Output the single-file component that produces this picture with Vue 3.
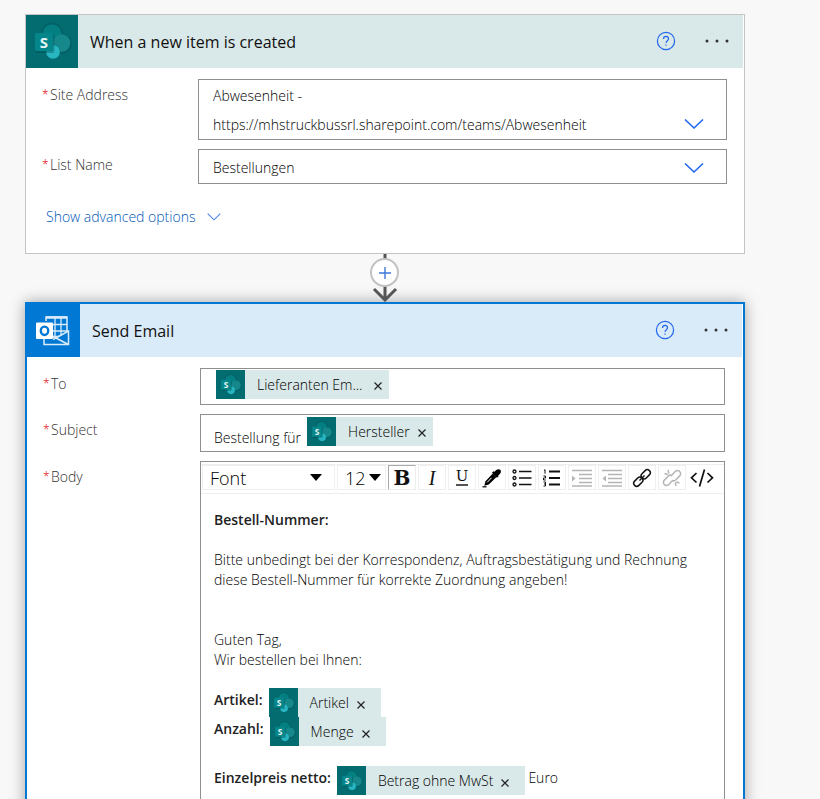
<script setup>
import { ref, h } from 'vue'

const site = ref('Abwesenheit')
const list = ref('Bestellungen')
const font = ref('Font')
const size = ref('12')
const subject = ref('Bestellung für')
const recipient = ref('')

const SharePointIcon = () =>
  h('svg', { viewBox: '0 0 52 52', 'aria-hidden': 'true', width: '100%', height: '100%' }, [
    h('circle', { cx: 26, cy: 18, r: 11, fill: '#00454a', opacity: 0.25 }),
    h('circle', { cx: 36, cy: 28.5, r: 10, fill: '#00454a', opacity: 0.25 }),
    h('circle', { cx: 26, cy: 18.5, r: 9.5, fill: '#037f82' }),
    h('circle', { cx: 35.5, cy: 27.5, r: 8.8, fill: '#16888c' }),
    h('circle', { cx: 27, cy: 36.5, r: 6.8, fill: '#28b5c2' }),
    h('rect', { x: 9.5, y: 18.5, width: 19, height: 19, rx: 2, fill: '#00454a', opacity: 0.35 }),
    h('rect', { x: 9, y: 17.5, width: 18, height: 18, rx: 1.5, fill: '#04868a' }),
    h('text', { x: 18, y: 32, 'text-anchor': 'middle', fill: '#e6f4f4', 'font-size': 15, 'font-weight': 700, 'font-family': 'Noto Sans, sans-serif' }, 'S'),
  ])

const Token = (props) =>
  h('span', { class: 'token', contenteditable: 'false' }, [
    h('span', { class: 'token-icon' }, [h(SharePointIcon)]),
    h('span', { class: 'token-label' }, props.label),
    h('button', { class: 'token-remove', type: 'button', 'aria-label': props.label + ' entfernen' }, [
      h('svg', { viewBox: '0 0 8 8', width: 8, height: 8 }, [
        h('path', { d: 'M.5.5l7 7M7.5.5l-7 7', stroke: '#222', 'stroke-width': 1.2, fill: 'none' }),
      ]),
    ]),
  ])
Token.props = ['label']
</script>

<template>
  <main class="canvas">
    <section class="card">
      <header class="card-header sharepoint">
        <span class="app-icon"><SharePointIcon /></span>
        <h2>When a new item is created</h2>
        <button class="help" type="button" aria-label="Help">
          <svg viewBox="0 0 20 20" width="20" height="20"><circle cx="10" cy="10" r="8.6" /><path d="M7.5 7.9c0-1.5 1-2.5 2.5-2.5s2.5 1 2.5 2.3c0 2-2.5 2.1-2.5 4.4M10 13.5v1.3" /></svg>
        </button>
        <button class="more" type="button" aria-label="Menu">
          <svg viewBox="0 0 24 4" width="24" height="4"><circle cx="2" cy="2" r="1.5" /><circle cx="12" cy="2" r="1.5" /><circle cx="22" cy="2" r="1.5" /></svg>
        </button>
      </header>
      <div class="fields">
        <label for="site"><span class="star">*</span>Site Address</label>
        <div class="picker">
          <select id="site" v-model="site" class="tall">
            <option value="Abwesenheit">Abwesenheit - https://mhstruckbussrl.sharepoint.com/teams/Abwesenheit</option>
          </select>
          <svg class="chevron" viewBox="0 0 20 12" width="20" height="12"><path d="M1 1.5l9 8.5 9-8.5" /></svg>
        </div>
        <label for="list"><span class="star">*</span>List Name</label>
        <div class="picker">
          <select id="list" v-model="list"><option>Bestellungen</option></select>
          <svg class="chevron" viewBox="0 0 20 12" width="20" height="12"><path d="M1 1.5l9 8.5 9-8.5" /></svg>
        </div>
      </div>
      <button class="advanced" type="button">
        Show advanced options
        <svg viewBox="0 0 14 8" width="14" height="8"><path d="M.7.7L7 6.8 13.3.7" /></svg>
      </button>
    </section>

    <div class="connector">
      <svg viewBox="0 0 30 48" width="30" height="48" aria-hidden="true"><path d="M15 0v46M4 35l11 11 11-11" fill="none" stroke="#555" stroke-width="3" /></svg>
      <button type="button" aria-label="Insert a new step">
        <svg viewBox="0 0 14 14" width="14" height="14"><path d="M7 1v12M1 7h12" stroke="#3c78d8" stroke-width="1.4" /></svg>
      </button>
    </div>

    <section class="card selected">
      <header class="card-header outlook">
        <span class="app-icon">
          <svg viewBox="0 0 53 53" width="53" height="53" aria-hidden="true">
            <g fill="none" stroke="#d9ebfa" stroke-width="1.5">
              <path d="M19 17V13h21v14M17 35v5.5h24.500V27L26 35.500M26 32.500l15.500 8" />
              <path d="M19 13.500h21" stroke-width="2.500" />
              <path d="M20 20.500h20M25 27h15M28 14v18M34 14v18M25 32.500h7" stroke-width="1.300" />
            </g>
            <rect x="9" y="18.500" width="17" height="16.500" rx="1" fill="#fff" />
            <ellipse cx="17.500" cy="26.800" rx="3.700" ry="4.200" fill="none" stroke="#0078d4" stroke-width="2.400" />
          </svg>
        </span>
        <h2>Send Email</h2>
        <button class="help" type="button" aria-label="Help">
          <svg viewBox="0 0 20 20" width="20" height="20"><circle cx="10" cy="10" r="8.6" /><path d="M7.5 7.9c0-1.5 1-2.5 2.5-2.5s2.5 1 2.5 2.3c0 2-2.5 2.1-2.5 4.4M10 13.5v1.3" /></svg>
        </button>
        <button class="more" type="button" aria-label="Menu">
          <svg viewBox="0 0 24 4" width="24" height="4"><circle cx="2" cy="2" r="1.5" /><circle cx="12" cy="2" r="1.5" /><circle cx="22" cy="2" r="1.5" /></svg>
        </button>
      </header>
      <div class="fields">
        <label for="to"><span class="star">*</span>To</label>
        <div class="token-field to">
          <Token label="Lieferanten Em..." />
          <input id="to" v-model="recipient" class="rest" type="text" />
        </div>
        <label for="subject"><span class="star">*</span>Subject</label>
        <div class="token-field">
          <input id="subject" v-model="subject" class="fit" type="text" />
          <Token label="Hersteller" />
        </div>
        <label id="body-label"><span class="star">*</span>Body</label>
        <div class="editor">
          <div class="toolbar" role="toolbar" aria-label="Format">
            <span class="tool-select font">
              <select v-model="font" aria-label="Font"><option>Font</option></select>
              <svg viewBox="0 0 12 7" width="12" height="7"><path d="M0 0h12L6 7z" /></svg>
            </span>
            <span class="tool-select size">
              <select v-model="size" aria-label="Font size"><option>12</option></select>
              <svg viewBox="0 0 12 7" width="12" height="7"><path d="M0 0h12L6 7z" /></svg>
            </span>
            <button type="button" class="bold" aria-label="Bold" aria-pressed="true">B</button>
            <button type="button" class="italic" aria-label="Italic">I</button>
            <button type="button" class="underline" aria-label="Underline"><span>U</span></button>
            <button type="button" aria-label="Text colour">
              <svg viewBox="0 0 20 20" width="20" height="20"><path d="M13.3 3c1-1.800 3.700-2.500 5-1.200s.6 3.800-1.200 4.900l-1 .8.500.8-1.600 1.500-5-5L11.500 3.200l.9.600z" /><path d="M10.800 5.500L3.500 13.300 2.300 17.700l4.500-1.100 7.700-7.500z" /><path d="M9.500 9.800l-4.300 4.600" stroke="#fff" stroke-width="1" /><path d="M.500 18.800h4" stroke="#111" stroke-width="1.300" /></svg>
            </button>
            <button type="button" aria-label="Bullet list">
              <svg viewBox="0 0 20 20" width="20" height="20" fill="none" stroke="#111"><g stroke-width="1.300"><circle cx="2.500" cy="3.500" r="1.500" /><circle cx="2.500" cy="10" r="1.500" /><circle cx="2.500" cy="16.500" r="1.500" /></g><path d="M7 3.500h12.500M7 10h12.500M7 16.500h12.500" stroke-width="1.300" /></svg>
            </button>
            <button type="button" aria-label="Numbered list">
              <svg viewBox="0 0 20 20" width="20" height="20" fill="none" stroke="#111"><path d="M2 2.500l1-.8v4M1.500 8h2v2h-2v2h2.300M1.500 14h2v4h-2M2 16h1.500" stroke-width="1" /><path d="M7 3.500h11M7 10h11M7 16.500h11" stroke-width="1.800" /></svg>
            </button>
            <button type="button" aria-label="Indent" disabled>
              <svg viewBox="0 0 20 20" width="20" height="20"><path d="M0 2.500h20M7 6.500h13M7 10.500h13M7 14.500h13M0 18h20" stroke="#b5b5b5" stroke-width="1.500" /><path d="M0 7.500l3.500 3L0 13.500z" fill="#b5b5b5" /></svg>
            </button>
            <button type="button" aria-label="Outdent" disabled>
              <svg viewBox="0 0 20 20" width="20" height="20"><path d="M0 2.500h20M6 6.500h14M6 10.500h14M6 14.500h14M0 18h20" stroke="#b5b5b5" stroke-width="1.500" /><path d="M4 7.500l-3.500 3 3.500 3z" fill="#b5b5b5" /></svg>
            </button>
            <button type="button" aria-label="Link">
              <svg viewBox="0 0 20 20" width="20" height="20" fill="none" stroke="#111" stroke-width="1.500"><rect x="-5.200" y="-3" width="10.400" height="6" rx="3" transform="translate(13.700 6.300) rotate(-45)" /><rect x="-5.200" y="-3" width="10.400" height="6" rx="3" transform="translate(6.300 13.700) rotate(-45)" /><path d="M7.500 12.500l5-5" /></svg>
            </button>
            <button type="button" aria-label="Unlink" disabled>
              <svg viewBox="0 0 20 20" width="20" height="20" fill="none" stroke="#b5b5b5" stroke-width="1.500"><path d="M9.500 7.500l3.700-4a3.100 3.100 0 0 1 4.500 0 3.100 3.100 0 0 1 0 4.400l-4 4.100c-1 1-2.500 1-3.600.1M10.500 12.500l-3.700 4a3.100 3.100 0 0 1-4.500 0 3.100 3.100 0 0 1 0-4.400l4-4.100c1-1 2.500-1 3.600-.1M6 2l.8 3.500M2.500 5.500l3.300 1M14 18l-.8-3.500M17.500 15l-3.300-1" /></svg>
            </button>
            <button type="button" class="code" aria-label="Code view">
              <svg viewBox="0 0 24 20" width="24" height="20" fill="none" stroke="#111" stroke-width="1.700"><path d="M6.500 5L1.500 9.800l5 4.700M17.500 5l5 4.800-5 4.700M14.500 1.500l-5 17" /></svg>
            </button>
          </div>
          <div class="content" contenteditable="true" role="textbox" aria-multiline="true" aria-labelledby="body-label" spellcheck="false">
            <p><b>Bestell-Nummer:</b></p>
            <p>Bitte unbedingt bei der Korrespondenz, Auftragsbestätigung und Rechnung<br />diese Bestell-Nummer für korrekte Zuordnung angeben!</p>
            <p class="greeting">Guten Tag,<br />Wir bestellen bei Ihnen:</p>
            <div class="group">
              <div class="line"><b>Artikel:</b><Token label="Artikel" /></div>
              <div class="line"><b>Anzahl:</b><Token label="Menge" /></div>
            </div>
            <div class="line"><b>Einzelpreis netto:</b><Token label="Betrag ohne MwSt" /><span class="unit">Euro</span></div>
          </div>
        </div>
      </div>
    </section>
  </main>
</template>

<style>
body {
  background: #f8f8f8;
}
</style>

<style scoped>
.canvas {
  box-sizing: border-box;
  height: 100vh;
  overflow: auto;
  scrollbar-width: none;
  padding: 14px 75px 0 25px;
  background: #f8f8f8;
  font: 300 14px/20px "Open Sans", "Noto Sans", sans-serif;
  color: #000;
}
.canvas :deep(*) {
  box-sizing: border-box;
}
.canvas :deep(button),
.canvas :deep(select),
.canvas :deep(input) {
  font: inherit;
  color: inherit;
  background: none;
  border: 0;
  padding: 0;
  margin: 0;
  outline: 0;
  border-radius: 0;
  appearance: none;
}
.canvas :deep(svg) {
  display: block;
}
.card {
  background: #fff;
  border: 1px solid #c4c4c4;
}
.selected {
  border: 2px solid #0078d4;
  box-shadow: 0 0 14px rgba(0, 0, 0, 0.35);
}
.card-header {
  display: flex;
  align-items: center;
  height: 53px;
  margin-right: 1px;
  padding-right: 14px;
}
.sharepoint {
  background: #d9e8e8;
}
.outlook {
  background: #d9eaf8;
}
.app-icon {
  width: 52px;
  height: 53px;
  background: #036c70;
}
.outlook .app-icon {
  width: 53px;
  background: #0078d4;
}
h2 {
  flex: 1;
  margin: 0 0 0 12px;
  font: 400 16px/20px "Open Sans", "Noto Sans", sans-serif;
  color: #111;
}
.canvas .help {
  margin: 0 29px 2px 0;
}
.canvas .more {
  margin-bottom: 2px;
}
.help svg {
  fill: none;
  stroke: #2266ee;
  stroke-width: 1.2;
}
.more svg {
  fill: #333;
}
.fields {
  display: grid;
  grid-template-columns: 156px minmax(0, 1fr);
  row-gap: 9px;
  padding: 11px 17px 0 16px;
}
.selected .fields {
  grid-template-columns: 157px minmax(0, 1fr);
  padding-right: 18px;
}
label {
  padding-top: 6px;
  color: #333;
}
.star {
  display: inline-block;
  width: 8px;
  font-size: 12px;
  vertical-align: 1px;
  line-height: 16px;
  color: #e00000;
}
.picker {
  display: grid;
  align-items: end;
  border: 1px solid #8f8f8f;
}
.canvas .picker select {
  grid-area: 1 / 1;
  width: 100%;
  min-height: 33px;
  padding: 3px 80px 1px 14px;
  line-height: 29px;
  color: #000;
  white-space: normal;
}
.canvas .picker select.tall {
  height: 59px;
  padding-top: 1px;
  padding-bottom: 0;
}
.chevron {
  grid-area: 1 / 1;
  justify-self: end;
  margin: 0 22px 9px 0;
  fill: none;
  stroke: #1f66f0;
  stroke-width: 1.6;
  pointer-events: none;
}
.canvas .advanced {
  display: flex;
  align-items: center;
  gap: 12px;
  margin: 23px 0 26px 20px;
  color: #0058b8;
}
.advanced svg {
  fill: none;
  stroke: #4d83e8;
  stroke-width: 1.1;
}
.connector {
  display: grid;
  justify-content: center;
  height: 48px;
}
.connector > svg {
  grid-area: 1 / 1;
}
.canvas .connector > button {
  grid-area: 1 / 1;
  display: grid;
  place-content: center;
  width: 29px;
  height: 29px;
  margin-top: 4px;
  border: 2px solid #c2c2c2;
  border-radius: 50%;
  background: #fff;
}
.token-field {
  display: flex;
  height: 38px;
  padding: 2px 13px 0;
  border: 1px solid #8f8f8f;
}
.token-field.to {
  height: 37px;
  padding: 1px 15px 0;
}
.canvas .fit {
  field-sizing: content;
  height: 20px;
  margin: 11px 6px 0 0;
  color: #000;
}
.canvas .rest {
  flex: 1;
  min-width: 0;
}
.canvas :deep(.token) {
  display: inline-flex;
  align-items: center;
  height: 29px;
  padding-right: 7px;
  background: #d9e8e8;
}
.canvas :deep(.token-icon) {
  width: 29px;
  height: 29px;
  background: #036c70;
}
.canvas :deep(.token-label) {
  margin: 0 8px 0 12px;
  padding-top: 1px;
}
.canvas :deep(.token-remove) {
  padding-top: 2px;
}
.to :deep(.token-label) {
  margin-right: 12px;
}
.content :deep(.token) {
  padding-right: 16px;
}
.content :deep(.token-remove) {
  padding-top: 4px;
}
.editor {
  border: 1px solid #8f8f8f;
  border-bottom: 0;
}
.toolbar {
  display: flex;
  gap: 2px;
  margin: 2px 0 0;
  padding: 0 1px 3px;
  border: 1px solid #eee;
  border-width: 1px 0;
}
.canvas .toolbar > * {
  display: grid;
  place-content: center;
  flex: none;
  width: 28px;
  height: 25px;
  border: 1px solid #efefef;
  color: #111;
}
.canvas .toolbar > .tool-select {
  display: flex;
  align-items: center;
  justify-content: space-between;
  padding: 0 12px 0 7px;
  font: 300 18px/22px "Open Sans", "Noto Sans", sans-serif;
  color: #000;
}
.tool-select select {
  flex: 1;
  min-width: 0;
}
.canvas .toolbar > .font {
  width: 133px;
}
.canvas .toolbar > .size {
  width: 49px;
  padding-right: 4px;
}
.canvas .toolbar > .bold {
  border-color: #aaa #eee #eee #aaa;
  font: 700 20px/22px "DejaVu Serif", serif;
}
.canvas .toolbar > .italic {
  font: italic 20px/22px "Liberation Serif", serif;
}
.canvas .toolbar > .underline {
  font: 15px/15px "DejaVu Serif", serif;
}
.underline span {
  border-bottom: 2px solid #555;
}
.canvas .toolbar > .code {
  border-color: transparent;
}
.content {
  padding: 16px 13px 24px;
  outline: 0;
}
.content p {
  margin: 0 0 20px;
}
.content .greeting {
  margin: 40px 0 18px;
}
.group {
  margin-bottom: 20px;
}
.line {
  display: flex;
  gap: 6px;
}
.content b {
  font-weight: 600;
  color: #222;
}
.line > b {
  padding-top: 2px;
}
.unit {
  margin-left: -3px;
  padding-top: 2px;
}
</style>
